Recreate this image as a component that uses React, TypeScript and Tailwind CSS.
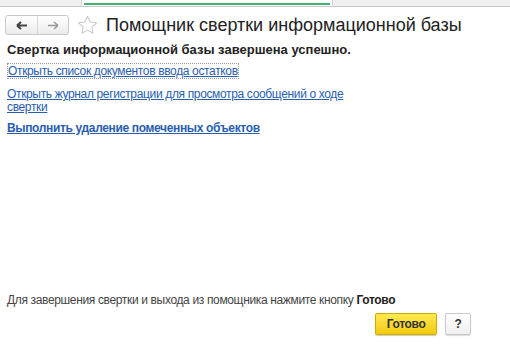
export default function App() {
  return (
    <div
      className="flex h-[352px] w-[510px] flex-col overflow-hidden bg-white text-[#333]"
      style={{ fontFamily: '"Liberation Sans", Arial, sans-serif' }}
    >
      <div className="flex h-[7px] border-b border-[#c8c8c8] bg-[#f0f0f0]">
        <div className="w-[82px] border-r border-[#d4d4d4]" />
        <div className="flex w-[251px] flex-col border-r border-[#d4d4d4] bg-white px-[2px] pt-[3px]">
          <div className="h-[2px] bg-[#3cb371]" />
        </div>
      </div>

      <div className="flex items-center pl-[5px] pt-[7px]">
        <div className="flex h-[20px] w-[64px] rounded-[3px] border border-[#c9c9c9] bg-gradient-to-b from-white to-[#ececec]">
          <div className="flex w-[32px] items-center justify-center border-r border-[#d6d6d6]">
            <svg width="12" height="9" viewBox="0 0 12 9">
              <path d="M1 4.5h10M1 4.5L5 1M1 4.5L5 8" stroke="#444" strokeWidth="2" fill="none" />
            </svg>
          </div>
          <div className="flex flex-1 items-center justify-center">
            <svg width="12" height="9" viewBox="0 0 12 9">
              <path d="M11 4.5H1M11 4.5L7 1M11 4.5L7 8" stroke="#999" strokeWidth="1.5" fill="none" />
            </svg>
          </div>
        </div>
        <svg className="ml-[8px]" width="21" height="20" viewBox="0 0 24 23">
          <path
            d="M12 1.5l3.1 6.6 7.2.9-5.3 4.9 1.4 7.1L12 17.4 5.6 21l1.4-7.1L1.7 9l7.2-.9z"
            fill="none"
            stroke="#c8c8c8"
            strokeWidth="1.2"
            strokeLinejoin="round"
          />
        </svg>
        <span className="ml-[8px] text-[18px] leading-[22px] text-[#222]">
          Помощник свертки информационной базы
        </span>
      </div>

      <div className="flex flex-1 flex-col px-[7px] pt-[6px] text-[12px] leading-[13px] tracking-[-0.35px]">
        <div className="text-[13px] leading-[15px] font-bold tracking-normal text-[#222]">
          Свертка информационной базы завершена успешно.
        </div>
        <div className="mt-[8px]">
          <span className="border border-dotted border-[#999] text-[#2a5db0] underline">
            Открыть список документов ввода остатков
          </span>
        </div>
        <div className="mt-[10px] w-[350px] text-[#2a5db0] underline">
          Открыть журнал регистрации для просмотра сообщений о ходе свертки
        </div>
        <div className="mt-[8px] font-bold text-[#2a5db0] underline">Выполнить удаление помеченных объектов</div>

        <div className="mt-auto text-[#444]">
          Для завершения свертки и выхода из помощника нажмите кнопку{' '}
          <span className="font-bold text-[#222]">Готово</span>
        </div>
        <div className="mb-[17px] mt-[6px] flex justify-end gap-[8px] pr-[32px]">
          <button className="h-[22px] w-[62px] rounded-[2px] border border-[#c9ae00] bg-gradient-to-b from-[#ffe94d] to-[#f2ca00] text-[12px] font-bold text-[#333] shadow-[0_1px_1px_rgba(0,0,0,0.2)]">
            Готово
          </button>
          <button className="h-[22px] w-[26px] rounded-[2px] border border-[#c9c9c9] bg-gradient-to-b from-white to-[#efefef] text-[12px] font-bold text-[#333] shadow-[0_1px_1px_rgba(0,0,0,0.15)]">
            ?
          </button>
        </div>
      </div>
    </div>
  );
}
